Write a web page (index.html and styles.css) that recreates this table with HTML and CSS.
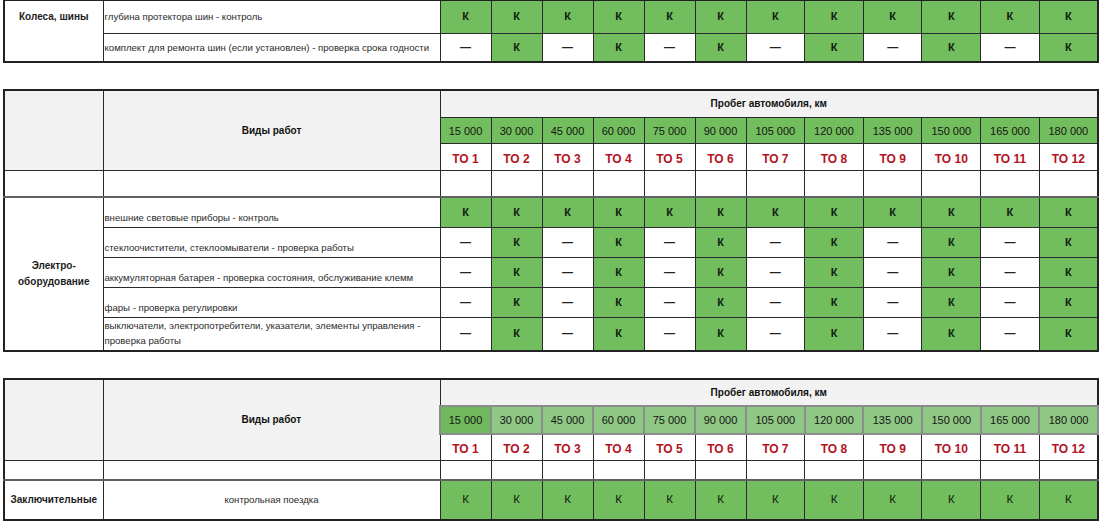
FILE: index.html
```html
<!DOCTYPE html>
<html lang="ru">
<head>
<meta charset="utf-8">
<title>Регламент ТО</title>
<link rel="stylesheet" href="styles.css">
</head>
<body>
<div class="page">

<table class="grid first">
  <colgroup><col class="c-cat"><col class="c-work"><col class="c-a"><col class="c-a"><col class="c-a"><col class="c-a"><col class="c-a"><col class="c-a"><col class="c-b"><col class="c-b"><col class="c-b"><col class="c-b"><col class="c-b"><col class="c-b"></colgroup>
  <tr class="r-t1a">
    <td class="cat top" rowspan="2">Колеса, шины</td>
    <td class="work mid">глубина протектора шин - контроль</td>
    <td class="k">К</td><td class="k">К</td><td class="k">К</td><td class="k">К</td><td class="k">К</td><td class="k">К</td><td class="k">К</td><td class="k">К</td><td class="k">К</td><td class="k">К</td><td class="k">К</td><td class="k">К</td>
  </tr>
  <tr class="r-t1b">
    <td class="work mid">комплект для ремонта шин (если установлен) - проверка срока годности</td>
    <td class="d">—</td><td class="k">К</td><td class="d">—</td><td class="k">К</td><td class="d">—</td><td class="k">К</td><td class="d">—</td><td class="k">К</td><td class="d">—</td><td class="k">К</td><td class="d">—</td><td class="k">К</td>
  </tr>
</table>

<table class="grid">
  <colgroup><col class="c-cat"><col class="c-work"><col class="c-a"><col class="c-a"><col class="c-a"><col class="c-a"><col class="c-a"><col class="c-a"><col class="c-b"><col class="c-b"><col class="c-b"><col class="c-b"><col class="c-b"><col class="c-b"></colgroup>
  <tr class="r-head">
    <td class="gray" rowspan="3"></td>
    <td class="gray title" rowspan="3">Виды работ</td>
    <td class="gray title" colspan="12">Пробег автомобиля, км</td>
  </tr>
  <tr class="r-km">
    <td class="km">15 000</td><td class="km">30 000</td><td class="km">45 000</td><td class="km">60 000</td><td class="km">75 000</td><td class="km">90 000</td><td class="km">105 000</td><td class="km">120 000</td><td class="km">135 000</td><td class="km">150 000</td><td class="km">165 000</td><td class="km">180 000</td>
  </tr>
  <tr class="r-to">
    <td class="to">ТО 1</td><td class="to">ТО 2</td><td class="to">ТО 3</td><td class="to">ТО 4</td><td class="to">ТО 5</td><td class="to">ТО 6</td><td class="to">ТО 7</td><td class="to">ТО 8</td><td class="to">ТО 9</td><td class="to">ТО 10</td><td class="to">ТО 11</td><td class="to">ТО 12</td>
  </tr>
  <tr class="r-empty">
    <td></td><td></td><td></td><td></td><td></td><td></td><td></td><td></td><td></td><td></td><td></td><td></td><td></td><td></td>
  </tr>
  <tr class="r-data sep">
    <td class="cat" rowspan="5">Электро-<br>оборудование</td>
    <td class="work">внешние световые приборы - контроль</td>
    <td class="k">К</td><td class="k">К</td><td class="k">К</td><td class="k">К</td><td class="k">К</td><td class="k">К</td><td class="k">К</td><td class="k">К</td><td class="k">К</td><td class="k">К</td><td class="k">К</td><td class="k">К</td>
  </tr>
  <tr class="r-data">
    <td class="work">стеклоочистители, стеклоомыватели - проверка работы</td>
    <td class="d">—</td><td class="k">К</td><td class="d">—</td><td class="k">К</td><td class="d">—</td><td class="k">К</td><td class="d">—</td><td class="k">К</td><td class="d">—</td><td class="k">К</td><td class="d">—</td><td class="k">К</td>
  </tr>
  <tr class="r-data">
    <td class="work">аккумуляторная батарея - проверка состояния, обслуживание клемм</td>
    <td class="d">—</td><td class="k">К</td><td class="d">—</td><td class="k">К</td><td class="d">—</td><td class="k">К</td><td class="d">—</td><td class="k">К</td><td class="d">—</td><td class="k">К</td><td class="d">—</td><td class="k">К</td>
  </tr>
  <tr class="r-data2">
    <td class="work">фары - проверка регулировки</td>
    <td class="d">—</td><td class="k">К</td><td class="d">—</td><td class="k">К</td><td class="d">—</td><td class="k">К</td><td class="d">—</td><td class="k">К</td><td class="d">—</td><td class="k">К</td><td class="d">—</td><td class="k">К</td>
  </tr>
  <tr class="r-data2">
    <td class="work">выключатели, электропотребители, указатели, элементы управления - проверка работы</td>
    <td class="d">—</td><td class="k">К</td><td class="d">—</td><td class="k">К</td><td class="d">—</td><td class="k">К</td><td class="d">—</td><td class="k">К</td><td class="d">—</td><td class="k">К</td><td class="d">—</td><td class="k">К</td>
  </tr>
</table>

<table class="grid">
  <colgroup><col class="c-cat"><col class="c-work"><col class="c-a"><col class="c-a"><col class="c-a"><col class="c-a"><col class="c-a"><col class="c-a"><col class="c-b"><col class="c-b"><col class="c-b"><col class="c-b"><col class="c-b"><col class="c-b"></colgroup>
  <tr class="r-head3">
    <td class="gray" rowspan="3"></td>
    <td class="gray title" rowspan="3">Виды работ</td>
    <td class="gray title" colspan="12">Пробег автомобиля, км</td>
  </tr>
  <tr class="r-km3">
    <td class="km km-alt first-km">15 000</td><td class="km km-alt">30 000</td><td class="km km-alt">45 000</td><td class="km km-alt">60 000</td><td class="km km-alt">75 000</td><td class="km km-alt">90 000</td><td class="km km-alt">105 000</td><td class="km km-alt">120 000</td><td class="km km-alt">135 000</td><td class="km km-alt">150 000</td><td class="km km-alt">165 000</td><td class="km km-alt">180 000</td>
  </tr>
  <tr class="r-to">
    <td class="to">ТО 1</td><td class="to">ТО 2</td><td class="to">ТО 3</td><td class="to">ТО 4</td><td class="to">ТО 5</td><td class="to">ТО 6</td><td class="to">ТО 7</td><td class="to">ТО 8</td><td class="to">ТО 9</td><td class="to">ТО 10</td><td class="to">ТО 11</td><td class="to">ТО 12</td>
  </tr>
  <tr class="r-empty3">
    <td></td><td></td><td></td><td></td><td></td><td></td><td></td><td></td><td></td><td></td><td></td><td></td><td></td><td></td>
  </tr>
  <tr class="r-final sep">
    <td class="cat">Заключительные</td>
    <td class="work-center">контрольная поездка</td>
    <td class="k light">К</td><td class="k light">К</td><td class="k light">К</td><td class="k light">К</td><td class="k light">К</td><td class="k light">К</td><td class="k light">К</td><td class="k light">К</td><td class="k light">К</td><td class="k light">К</td><td class="k light">К</td><td class="k light">К</td>
  </tr>
</table>

</div>
</body>
</html>
```
FILE: styles.css
```css
* { box-sizing: border-box; }

body {
  margin: 0;
  background: #ffffff;
  font-family: "Liberation Sans", Arial, sans-serif;
  color: #1c1c1c;
}

.page {
  display: flex;
  flex-direction: column;
  gap: 26px;
  padding: 0 3px;
}

.grid {
  border-collapse: collapse;
  table-layout: fixed;
  width: 1094px;
  border: 2px solid #222;
}

.grid.first { margin-top: -1px; }

.c-cat { width: 99px; }
.c-work { width: 337px; }
.c-a { width: 51px; }
.c-b { width: 58.66px; }

.grid td {
  border: 1px solid #2a2a2a;
  padding: 0;
  font-size: 10px;
  text-align: center;
  vertical-align: middle;
  line-height: 15px;
}

.r-t1a { height: 33px; }
.r-t1b { height: 29px; }
.r-head { height: 27px; }
.r-km { height: 26px; }
.r-to { height: 27px; }
.r-empty { height: 27px; }
.r-data { height: 30px; }
.r-data2 { height: 30px; }
.r-head3 { height: 27px; }
.r-km3 { height: 28px; }
.r-empty3 { height: 19px; }
.r-final { height: 40px; }

.grid tr.sep td { border-top: 2px solid #606060; }

.grid td.cat {
  font-weight: bold;
  font-size: 10px;
  text-align: center;
  line-height: 16px;
}

.grid td.cat.top {
  vertical-align: top;
  padding-top: 8px;
}

.grid td.work {
  text-align: left;
  vertical-align: bottom;
  padding: 0 2px 2px 1px;
  color: #2a2a2a;
  font-size: 9.6px;
  white-space: normal;
}

.grid td.work.mid {
  vertical-align: middle;
  padding-bottom: 0;
}

.grid td.work-center {
  color: #2a2a2a;
  font-size: 9.6px;
}

.grid td.gray { background: #f2f2f2; }

.grid td.title {
  font-weight: bold;
  font-size: 10px;
  color: #111;
}

.grid td.km {
  background: #72bd5d;
  font-size: 11px;
  color: #151515;
  padding-top: 2px;
}

.grid td.km-alt {
  background: #8fc784;
  border: 2px solid #8c8c8c;
}

.grid td.km-alt.first-km { background: #70b85e; }

.grid td.to {
  font-weight: bold;
  font-size: 12px;
  color: #b3131f;
  vertical-align: bottom;
  padding-bottom: 3px;
}

.grid td.k {
  background: #72bd5d;
  font-weight: bold;
  font-size: 11px;
  color: #102010;
}

.grid td.k.light { font-weight: normal; font-size: 11.5px; }

.grid td.d {
  background: #ffffff;
  font-weight: bold;
  font-size: 11px;
  color: #222;
}
```
